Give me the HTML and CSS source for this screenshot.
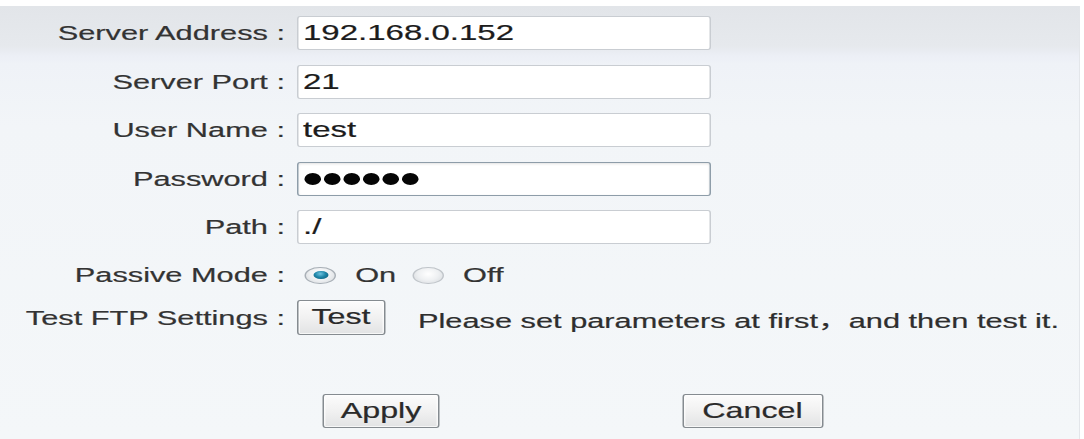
FILE: index.html
```html
<!DOCTYPE html>
<html lang="en">
<head>
<meta charset="utf-8">
<title>FTP Settings</title>
<link rel="stylesheet" href="styles.css">
</head>
<body>
<div class="panel">
  <form class="form">
    <div class="row field-row">
      <span class="label">Server Address :</span>
      <div class="field">192.168.0.152</div>
    </div>
    <div class="row field-row">
      <span class="label">Server Port :</span>
      <div class="field">21</div>
    </div>
    <div class="row field-row">
      <span class="label">User Name :</span>
      <div class="field">test</div>
    </div>
    <div class="row field-row">
      <span class="label">Password :</span>
      <div class="field field-focus"><span class="dots"><i></i><i></i><i></i><i></i><i></i><i></i></span></div>
    </div>
    <div class="row field-row">
      <span class="label">Path :</span>
      <div class="field">./</div>
    </div>
    <div class="row passive">
      <span class="label">Passive Mode :</span>
      <span class="radio checked"></span><span class="opt">On</span>
      <span class="radio radio-off"></span><span class="opt">Off</span>
    </div>
    <div class="row test">
      <span class="label">Test FTP Settings :</span>
      <button type="button" class="btn btn-test">Test</button>
      <span class="hint">Please set parameters at first，and then test it.</span>
    </div>
    <div class="actions">
      <button type="button" class="btn btn-apply">Apply</button>
      <button type="button" class="btn btn-cancel">Cancel</button>
    </div>
  </form>
</div>
</body>
</html>
```
FILE: styles.css
```css
* {
  box-sizing: border-box;
  margin: 0;
  padding: 0;
}

html, body {
  background: #ffffff;
}

body {
  font-family: "Liberation Sans", Arial, "Noto Sans CJK SC", sans-serif;
  overflow: hidden;
}

.panel {
  margin-top: 6px;
  width: 1080px;
  height: 433px;
  border-right: 1px solid #e3e6ea;
  background: linear-gradient(to bottom,
    #e2e5e9 0px,
    #e6e9ed 40px,
    #eceff6 50px,
    #eff2f7 58px,
    #f2f5f8 120px,
    #f4f7f9 100%);
  overflow: hidden;
}

.form {
  width: 720px;
  padding-top: 10px;
  transform: scaleX(1.5);
  transform-origin: 0 0;
}

.row {
  display: flex;
  align-items: center;
}

.label {
  flex: none;
  width: 190px;
  margin-right: 8px;
  text-align: right;
  white-space: nowrap;
  font-size: 20.5px;
  color: #333333;
  -webkit-text-stroke: 0.2px #333333;
}

.field-row {
  height: 34px;
  margin-bottom: 14.5px;
}

.field {
  display: flex;
  align-items: center;
  width: 276px;
  height: 34px;
  padding-left: 3px;
  background: #ffffff;
  border: 1px solid #c9cdd2;
  border-radius: 2px / 3px;
  font-size: 22px;
  color: #1c1c1c;
  -webkit-text-stroke: 0.2px #1c1c1c;
}

.field-focus {
  border-color: #8e9da9;
  box-shadow: inset 0 1px 2px rgba(0, 0, 0, 0.12);
}

.dots {
  display: flex;
  gap: 1.7px;
  padding-left: 1px;
}

.dots i {
  display: block;
  width: 11.3px;
  height: 12px;
  border-radius: 50%;
  background: #050505;
}

.passive {
  height: 24px;
  margin-top: 19px;
}

.radio {
  flex: none;
  display: flex;
  align-items: center;
  justify-content: center;
  width: 20.5px;
  height: 17px;
  margin-left: 5.3px;
  border-radius: 50%;
  border: 1.5px solid #a9b0b7;
  background: radial-gradient(ellipse at 50% 40%, #ffffff 0%, #eef0f2 50%, #d3d7db 100%);
}

.radio-off {
  margin-left: 11px;
  border-color: #c0c5ca;
}

.radio.checked::after {
  content: "";
  width: 10px;
  height: 8.5px;
  border-radius: 50%;
  background: radial-gradient(ellipse at 45% 35%, #6fc3df 0%, #1f86a8 45%, #0b5470 100%);
}

.opt {
  margin-left: 13px;
  font-size: 20.5px;
  color: #333333;
  -webkit-text-stroke: 0.2px #333333;
}

.test {
  height: 35px;
  margin-top: 13px;
}

.btn {
  flex: none;
  font-family: "Liberation Sans", Arial, sans-serif;
  font-size: 21.5px;
  color: #2a2a2a;
  -webkit-text-stroke: 0.2px #2a2a2a;
  border: 1px solid #858b90;
  border-radius: 2px / 3px;
  background: linear-gradient(to bottom, #fcfcfc 0%, #f1f1f1 50%, #e2e3e4 100%);
  box-shadow: inset 0 0 0 1px rgba(255, 255, 255, 0.7);
  cursor: pointer;
}

.btn-test {
  width: 58.7px;
  height: 35px;
}

.hint {
  margin-left: 22px;
  padding-top: 3px;
  white-space: nowrap;
  font-size: 20.5px;
  color: #2e2e2e;
  -webkit-text-stroke: 0.2px #2e2e2e;
}

.actions {
  display: flex;
  height: 34px;
  margin-top: 59px;
}

.btn-apply {
  width: 78.7px;
  height: 34px;
  margin-left: 214.7px;
}

.btn-cancel {
  width: 94px;
  height: 34px;
  margin-left: 161.3px;
}
```
